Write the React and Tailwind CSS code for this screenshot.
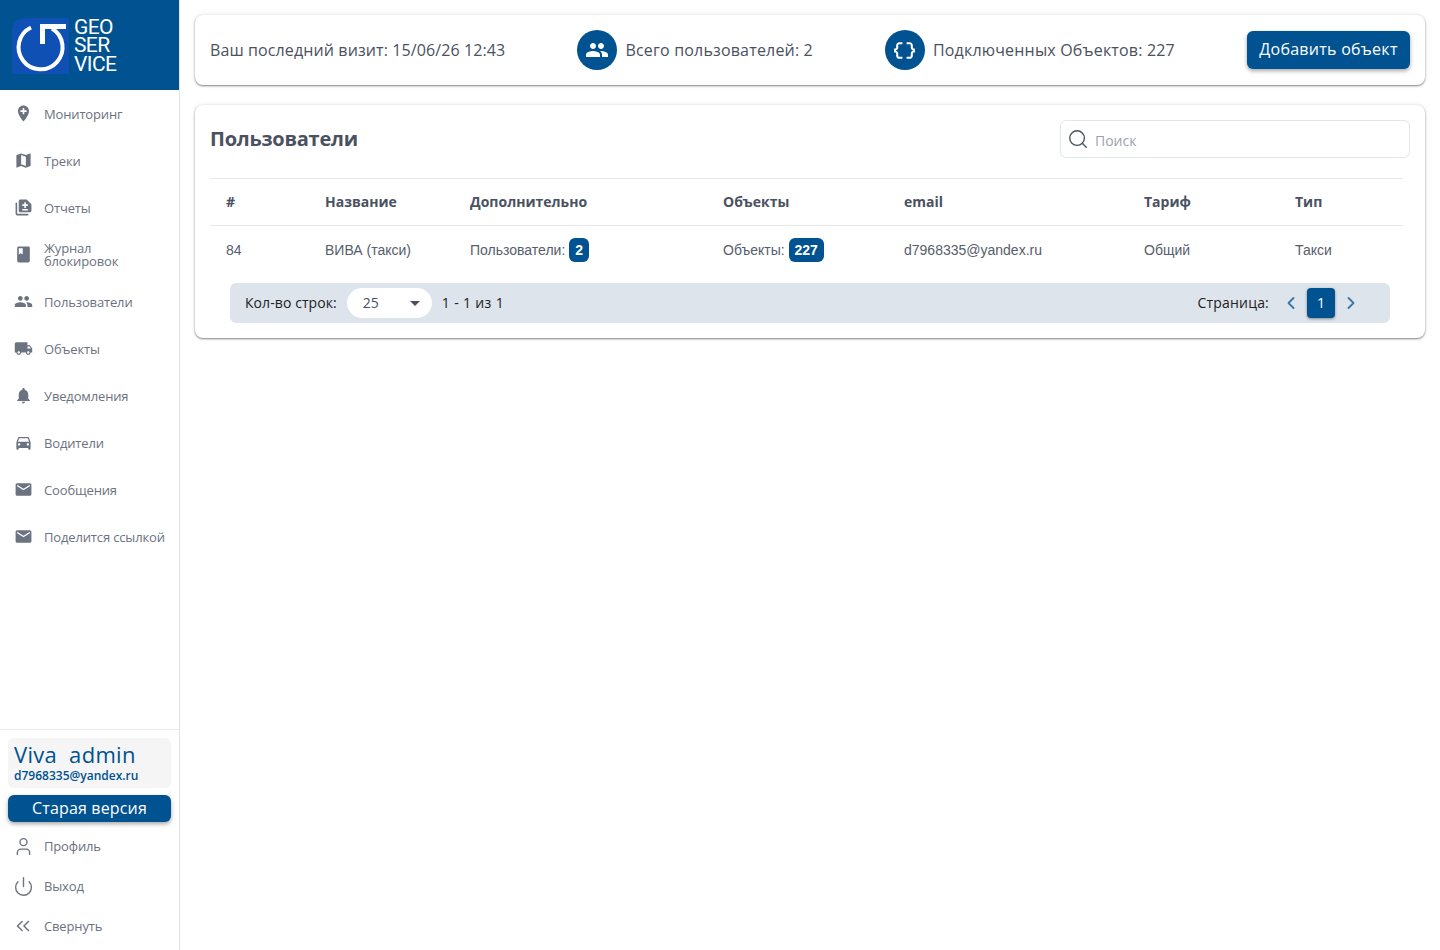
import { ChevronLeft, ChevronRight, ChevronsLeft, Search, User, Power } from "lucide-react";
import {
    MdAddLocation, MdMap, MdBook, MdPeople, MdLocalShipping,
    MdNotifications, MdDirectionsCar, MdEmail, MdArrowDropDown, MdDataObject,
} from "react-icons/md";

// stacked page with plus and dash, the pack has no exact match
const ReportIcon = ({ size, className }) => (
    <svg width={size} height={size} viewBox="0 0 24 24" className={className} fill="currentColor">
        <path d="M4 6H2v14c0 1.1.9 2 2 2h14v-2H4V6z" />
        <path fillRule="evenodd" d="M8 2h8l6 6v8c0 1.1-.9 2-2 2H8c-1.1 0-2-.9-2-2V4c0-1.1.9-2 2-2zM13 5.5v2.5h-2.500v2H13v2.500h2V10h2.500V8H15V5.500h-2zM10.500 14v1.800h7V14h-7z" />
    </svg>
);

const navItems = [
    { label: "Мониторинг", icon: MdAddLocation },
    { label: "Треки", icon: MdMap },
    { label: "Отчеты", icon: ReportIcon },
    { label: "Журнал блокировок", icon: MdBook, wrap: true },
    { label: "Пользователи", icon: MdPeople },
    { label: "Объекты", icon: MdLocalShipping },
    { label: "Уведомления", icon: MdNotifications },
    { label: "Водители", icon: MdDirectionsCar },
    { label: "Сообщения", icon: MdEmail },
    { label: "Поделится ссылкой", icon: MdEmail },
];

const footerItems = [
    { label: "Профиль", icon: User, size: 21 },
    { label: "Выход", icon: Power, size: 21 },
    { label: "Свернуть", icon: ChevronsLeft, size: 22 },
];

const columns = [
    { title: "#", width: "w-[99px]" },
    { title: "Название", width: "w-[145px]" },
    { title: "Дополнительно", width: "w-[253px]" },
    { title: "Объекты", width: "w-[181px]" },
    { title: "email", width: "w-[240px]" },
    { title: "Тариф", width: "w-[151px]" },
    { title: "Тип", width: "w-[124px]" },
];

const Logo = () => (
    <div className="h-[90px] bg-[#005291] flex items-center pl-3 pt-[1px] shrink-0">
        <svg width="57" height="56" viewBox="0 0 57 56" className="block">
            <path d="M14 0H57V56H0V14Q0 0 14 0Z" fill="#0f50b4" />
            <path d="M19 9.500A22 22 0 1 0 40 10.500" fill="none" stroke="#fff" strokeWidth="4" />
            <path d="M30.500 26V8.500H54" fill="none" stroke="#fff" strokeWidth="5" />
        </svg>
        <div className="ml-[5px] text-white font-['Roboto',sans-serif] text-[21px] leading-[18.5px] tracking-[-0.6px]">
            <div>GEO</div>
            <div>SER</div>
            <div>VICE</div>
        </div>
    </div>
);

const Badge = ({ children }) => (
    <span className="inline-flex items-center justify-center h-6 px-[6px] min-w-5 rounded-md bg-[#005291] text-white font-bold text-sm">
        {children}
    </span>
);

const Stat = ({ icon, text }) => (
    <div className="flex items-center gap-2">
        <div className="w-10 h-10 rounded-full bg-[#005291] text-white flex items-center justify-center">
            {icon}
        </div>
        <span className="text-base text-[#4a5160] tracking-[0.18px]">{text}</span>
    </div>
);

export default function App() {
    return (
        <div className="flex h-[950px] bg-white font-['Open_Sans',sans-serif] overflow-hidden">
            <aside className="w-[180px] shrink-0 border-r border-[#e2e2e2] flex flex-col justify-between">
                <div>
                    <Logo />
                    <nav>
                        {navItems.map(({ label, icon: Icon, wrap }) => (
                            <div key={label} className="h-[47px] flex items-center pl-[14px] text-[#6b7280]">
                                <div className="w-[18px] flex justify-center shrink-0">
                                    <Icon size={19} className="shrink-0" />
                                </div>
                                <span className={`ml-3 text-[13px] tracking-[-0.15px] ${wrap ? "leading-[13px] w-[90px]" : "mt-[2px]"}`}>{label}</span>
                            </div>
                        ))}
                    </nav>
                </div>
                <div className="border-t border-[#ececec] pt-2 pb-1">
                    <div className="mx-2 h-[50px] rounded-md bg-[#f5f5f5] px-[6px] text-[#005291] pt-[2px]">
                        <div className="text-[22px] leading-[28px] tracking-[0.3px] font-medium">Viva&nbsp; admin</div>
                        <div className="text-[12px] leading-[16px] font-semibold">d7968335@yandex.ru</div>
                    </div>
                    <button className="mx-2 mt-[7px] w-[163px] h-[27px] rounded-md bg-[#005291] text-white text-base tracking-[0.15px] pb-[2px] shadow-[0_2px_4px_rgba(0,0,0,0.35)] flex items-center justify-center">
                        Старая версия
                    </button>
                    <div className="mt-[4px]">
                        {footerItems.map(({ label, icon: Icon, size }) => (
                            <div key={label} className="h-10 flex items-center pl-[14px] text-[#6b7280]">
                                <div className="w-[18px] flex justify-center shrink-0">
                                    <Icon size={size} strokeWidth={1.6} className="shrink-0" />
                                </div>
                                <span className="ml-3 text-[13px] tracking-[-0.15px] mt-[2px]">{label}</span>
                            </div>
                        ))}
                    </div>
                </div>
            </aside>

            <main className="flex-1 px-[15px] pt-[15px]">
                <section className="h-[70px] rounded-lg bg-white shadow-[0_1px_2px_rgba(0,0,0,0.45),0_0_5px_rgba(0,0,0,0.1)] flex items-center justify-between px-[15px]">
                    <span className="text-base text-[#4a5160] tracking-[0.11px]">Ваш последний визит: 15/06/26 12:43</span>
                    <Stat icon={<MdPeople size={24} />} text="Всего пользователей: 2" />
                    <Stat icon={<MdDataObject size={25} />} text="Подключенных Объектов: 227" />
                    <button className="w-[163px] h-[38px] rounded-md bg-[#005291] text-white text-base tracking-[0.27px] pb-[2px] shadow-[0_2px_4px_rgba(0,0,0,0.35)]">
                        Добавить объект
                    </button>
                </section>

                <section className="mt-5 h-[233px] rounded-lg bg-white shadow-[0_1px_2px_rgba(0,0,0,0.45),0_0_5px_rgba(0,0,0,0.1)] px-[15px] pt-[15px]">
                    <div className="flex items-center justify-between h-[38px]">
                        <h1 className="text-xl font-bold text-[#4a5160] tracking-[-0.25px]">Пользователи</h1>
                        <div className="w-[350px] h-[38px] rounded-md border border-[#dfe6ee] flex items-center pl-[6px]">
                            <Search size={22} strokeWidth={1.5} className="text-[#4a5160]" />
                            <span className="ml-[6px] text-sm text-[#9ca3af] mt-[3px]">Поиск</span>
                        </div>
                    </div>

                    <table className="mt-5 table-fixed w-[1193px] border-t border-[#e8e8e8] border-collapse">
                        <colgroup>
                            {columns.map((col) => <col key={col.title} className={col.width} />)}
                        </colgroup>
                        <thead>
                            <tr className="h-[47px] border-b border-[#e8e8e8]">
                                {columns.map((col) => (
                                    <th key={col.title} className="px-4 text-left text-sm font-bold text-[#4a5160]">{col.title}</th>
                                ))}
                            </tr>
                        </thead>
                        <tbody className="font-['Liberation_Sans',sans-serif] text-sm text-[#565d6b]">
                            <tr className="h-[48px]">
                                <td className="px-4">84</td>
                                <td className="px-4">ВИВА (такси)</td>
                                <td className="px-4">Пользователи: <Badge>2</Badge></td>
                                <td className="px-4">Объекты: <Badge>227</Badge></td>
                                <td className="px-4">d7968335@yandex.ru</td>
                                <td className="px-4">Общий</td>
                                <td className="px-4">Такси</td>
                            </tr>
                        </tbody>
                    </table>

                    <div className="mt-[9px] ml-5 w-[1160px] h-10 rounded-md bg-[#dde4ec] flex items-center justify-between pl-[15px] pr-[29px] text-sm text-[#222]">
                        <div className="flex items-center">
                            <span className="tracking-[0.08px]">Кол-во строк:</span>
                            <div className="ml-[10px] w-[85px] h-[30px] rounded-full bg-white flex items-center justify-between pl-4 pr-[5px] text-[#4a5160]">
                                <span>25</span>
                                <MdArrowDropDown size={24} />
                            </div>
                            <span className="ml-[10px] tracking-[0.35px]">1 - 1 из 1</span>
                        </div>
                        <div className="flex items-center">
                            <span className="tracking-[0.2px]">Страница:</span>
                            <ChevronLeft size={20} strokeWidth={2.25} className="ml-[12px] text-[#3b77ab]" />
                            <div className="ml-[6px] w-7 h-[30px] rounded bg-[#005291] text-white flex items-center justify-center shadow-[0_1px_3px_rgba(0,0,0,0.4)]">1</div>
                            <ChevronRight size={20} strokeWidth={2.25} className="ml-[6px] text-[#3b77ab]" />
                        </div>
                    </div>
                </section>
            </main>
        </div>
    );
}
